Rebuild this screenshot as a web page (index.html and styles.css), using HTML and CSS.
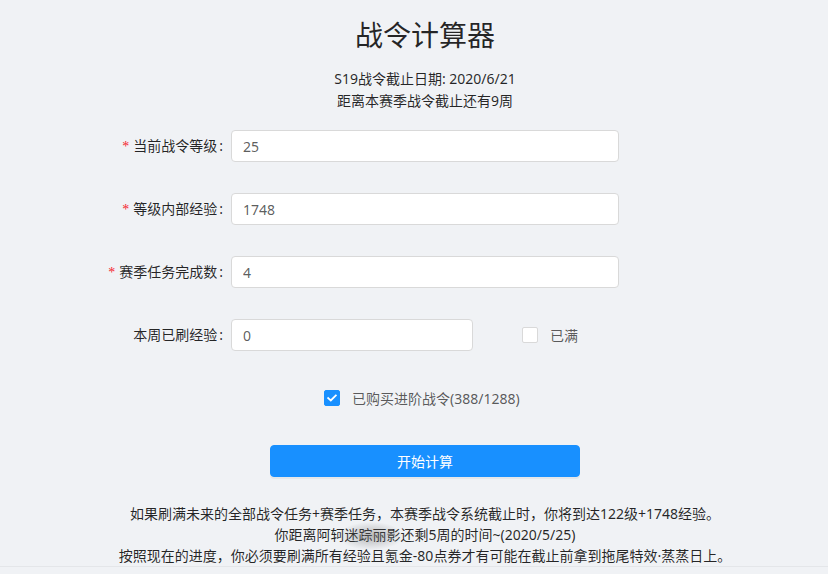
FILE: index.html
```html
<!DOCTYPE html>
<html lang="zh-CN">
<head>
    <meta charset="UTF-8">
    <meta name="viewport" content="width=device-width, initial-scale=1.0">
    <title>战令计算器</title>
    <link rel="stylesheet" href="styles.css">
</head>
<body>

<div class="page">
    <h1 class="title">战令计算器</h1>
    <div class="deadline">
        <p>S19战令截止日期: 2020/6/21</p>
        <p>距离本赛季战令截止还有9周</p>
    </div>

    <div class="form">
        <div class="form-row">
            <label class="label"><span class="required">*</span>当前战令等级</label>
            <input type="text" class="input" value="25">
        </div>
        <div class="form-row">
            <label class="label"><span class="required">*</span>等级内部经验</label>
            <input type="text" class="input" value="1748">
        </div>
        <div class="form-row">
            <label class="label"><span class="required">*</span>赛季任务完成数</label>
            <input type="text" class="input" value="4">
        </div>
        <div class="form-row">
            <label class="label">本周已刷经验</label>
            <input type="text" class="input input-short" value="0">
            <label class="check check-full">
                <span class="box"></span>
                <span class="check-text">已满</span>
            </label>
        </div>
        <div class="form-row row-buy">
            <label class="check">
                <span class="box checked">
                    <svg width="10" height="8" viewBox="0 0 10 8"><path d="M1.2 4.1 L3.8 6.5 L8.8 1.4" fill="none" stroke="#fff" stroke-width="1.8" stroke-linecap="square"/></svg>
                </span>
                <span class="check-text">已购买进阶战令(388/1288)</span>
            </label>
        </div>
    </div>

    <button class="submit">开始计算</button>

    <div class="result">
        <p>如果刷满未来的全部战令任务+赛季任务，本赛季战令系统截止时，你将到达122级+1748经验。</p>
        <p>你距离阿轲<span class="smudge">迷踪丽影</span>还剩5周的时间~(2020/5/25)</p>
        <p>按照现在的进度，你必须要刷满所有经验且氪金-80点券才有可能在截止前拿到拖尾特效·蒸蒸日上。</p>
    </div>
    <div class="footer-line"></div>
</div>

</body>
</html>
```

FILE: styles.css
```css
body {
    margin: 0;
    background-color: #f0f2f5;
    font-family: "Noto Sans", "Noto Sans CJK SC", sans-serif;
    font-size: 14px;
    color: rgba(0, 0, 0, 0.85);
}
.page {
    padding-left: 22px;
    text-align: center;
}
.title {
    margin: 15px 0 0;
    font-size: 28px;
    line-height: 40px;
    font-weight: normal;
}
.deadline {
    margin-top: 13px;
}
.deadline p,
.result p {
    margin: 0;
    line-height: 22px;
}
.form {
    width: 660px;
    margin: 18px auto 0;
    text-align: left;
}
.form-row {
    display: flex;
    align-items: center;
    height: 32px;
    margin-bottom: 31px;
}
.label {
    width: 136px;
    flex-shrink: 0;
    text-align: right;
    line-height: 32px;
    white-space: nowrap;
}
.label::after {
    content: ":";
    margin: 0 8px 0 2px;
}
.required {
    color: #f5222d;
    margin-right: 4px;
    font-family: "Liberation Serif", serif;
}
.input {
    box-sizing: border-box;
    width: 388px;
    height: 32px;
    padding: 4px 11px;
    border: 1px solid #d9d9d9;
    border-radius: 4px;
    background: #fff;
    font-family: inherit;
    font-size: 14px;
    color: rgba(0, 0, 0, 0.65);
    outline: none;
}
.input-short {
    width: 242px;
}
.check {
    display: flex;
    align-items: center;
    color: rgba(0, 0, 0, 0.65);
}
.check-full {
    margin-left: 49px;
}
.box {
    box-sizing: border-box;
    width: 16px;
    height: 16px;
    border: 1px solid #d9d9d9;
    border-radius: 2px;
    background: #fff;
    display: flex;
    align-items: center;
    justify-content: center;
}
.box.checked {
    background: #1890ff;
    border-color: #1890ff;
}
.check-text {
    margin-left: 12px;
}
.row-buy {
    padding-left: 229px;
    margin-bottom: 31px;
}
.submit {
    display: block;
    width: 310px;
    height: 32px;
    margin: 0 auto;
    border: 1px solid #1890ff;
    border-radius: 4px;
    background: #1890ff;
    color: #fff;
    font-family: inherit;
    font-size: 14px;
    box-shadow: 0 2px 0 rgba(0, 0, 0, 0.045);
}
.result {
    margin-top: 26px;
}
.result p {
    line-height: 21px;
}
.smudge {
    position: relative;
}
.smudge::before {
    content: "";
    position: absolute;
    left: -6px;
    top: -3px;
    width: 64px;
    height: 28px;
    border-radius: 50%;
    background: radial-gradient(ellipse at center, rgba(110, 110, 110, 0.45), rgba(110, 110, 110, 0) 72%);
}
.footer-line {
    margin-left: -22px;
    border-top: 1px solid #e4e6e9;
}
```
